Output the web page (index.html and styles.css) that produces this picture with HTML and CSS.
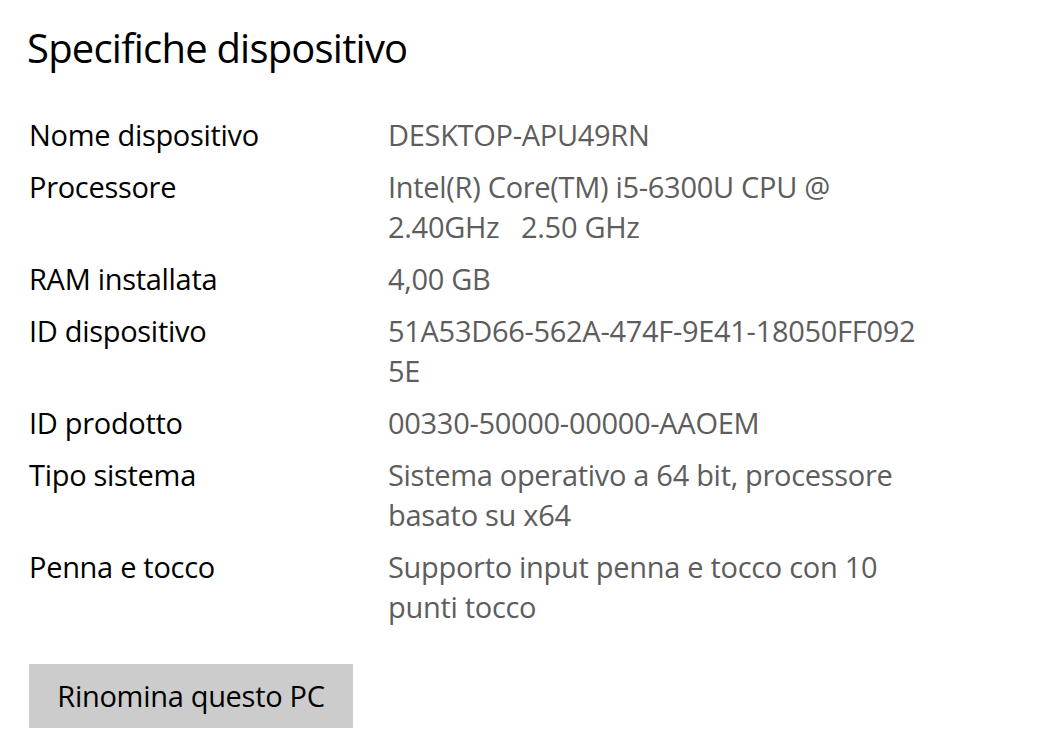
FILE: index.html
```html
<!DOCTYPE html>
<html lang="it">
<head>
<meta charset="utf-8">
<title>Specifiche dispositivo</title>
<link rel="stylesheet" href="styles.css">
</head>
<body>
<main class="page">
  <h1 class="title">Specifiche dispositivo</h1>
  <dl class="specs">
    <dt class="label">Nome dispositivo</dt>
    <dd class="value">DESKTOP-APU49RN</dd>
    <dt class="label">Processore</dt>
    <dd class="value">Intel(R) Core(TM) i5-6300U CPU @<br>2.40GHz&nbsp;&nbsp;&nbsp;2.50 GHz</dd>
    <dt class="label">RAM installata</dt>
    <dd class="value">4,00 GB</dd>
    <dt class="label">ID dispositivo</dt>
    <dd class="value">51A53D66-562A-474F-9E41-18050FF092<br>5E</dd>
    <dt class="label">ID prodotto</dt>
    <dd class="value">00330-50000-00000-AAOEM</dd>
    <dt class="label">Tipo sistema</dt>
    <dd class="value">Sistema operativo a 64 bit, processore<br>basato su x64</dd>
    <dt class="label">Penna e tocco</dt>
    <dd class="value">Supporto input penna e tocco con 10<br>punti tocco</dd>
  </dl>
  <button class="rename" type="button">Rinomina questo PC</button>
</main>
</body>
</html>
```
FILE: styles.css
```css
html, body {
  margin: 0;
  padding: 0;
  background: #ffffff;
}

body {
  font-family: "Open Sans", "Noto Sans", "Liberation Sans", sans-serif;
  color: #000000;
}

.page {
  padding: 23px 0 0 29px;
  display: flex;
  flex-direction: column;
  align-items: flex-start;
}

.title {
  margin: 0 0 0 -2px;
  font-size: 40px;
  font-weight: 400;
  line-height: 50px;
  letter-spacing: -0.8px;
  color: #000000;
}

.specs {
  margin: 42px 0 0 0;
  display: grid;
  grid-template-columns: 359px auto;
  row-gap: 12px;
  font-size: 29px;
  line-height: 40px;
  letter-spacing: -0.3px;
}

.label {
  margin: 0;
  color: #000000;
}

.value {
  margin: 0;
  color: #5d5d5d;
  white-space: nowrap;
}

.rename {
  margin-top: 37px;
  width: 324px;
  height: 64px;
  border: none;
  background: #cccccc;
  color: #000000;
  font-family: inherit;
  font-size: 29px;
  line-height: 40px;
  letter-spacing: -0.3px;
  padding: 0;
}
```
